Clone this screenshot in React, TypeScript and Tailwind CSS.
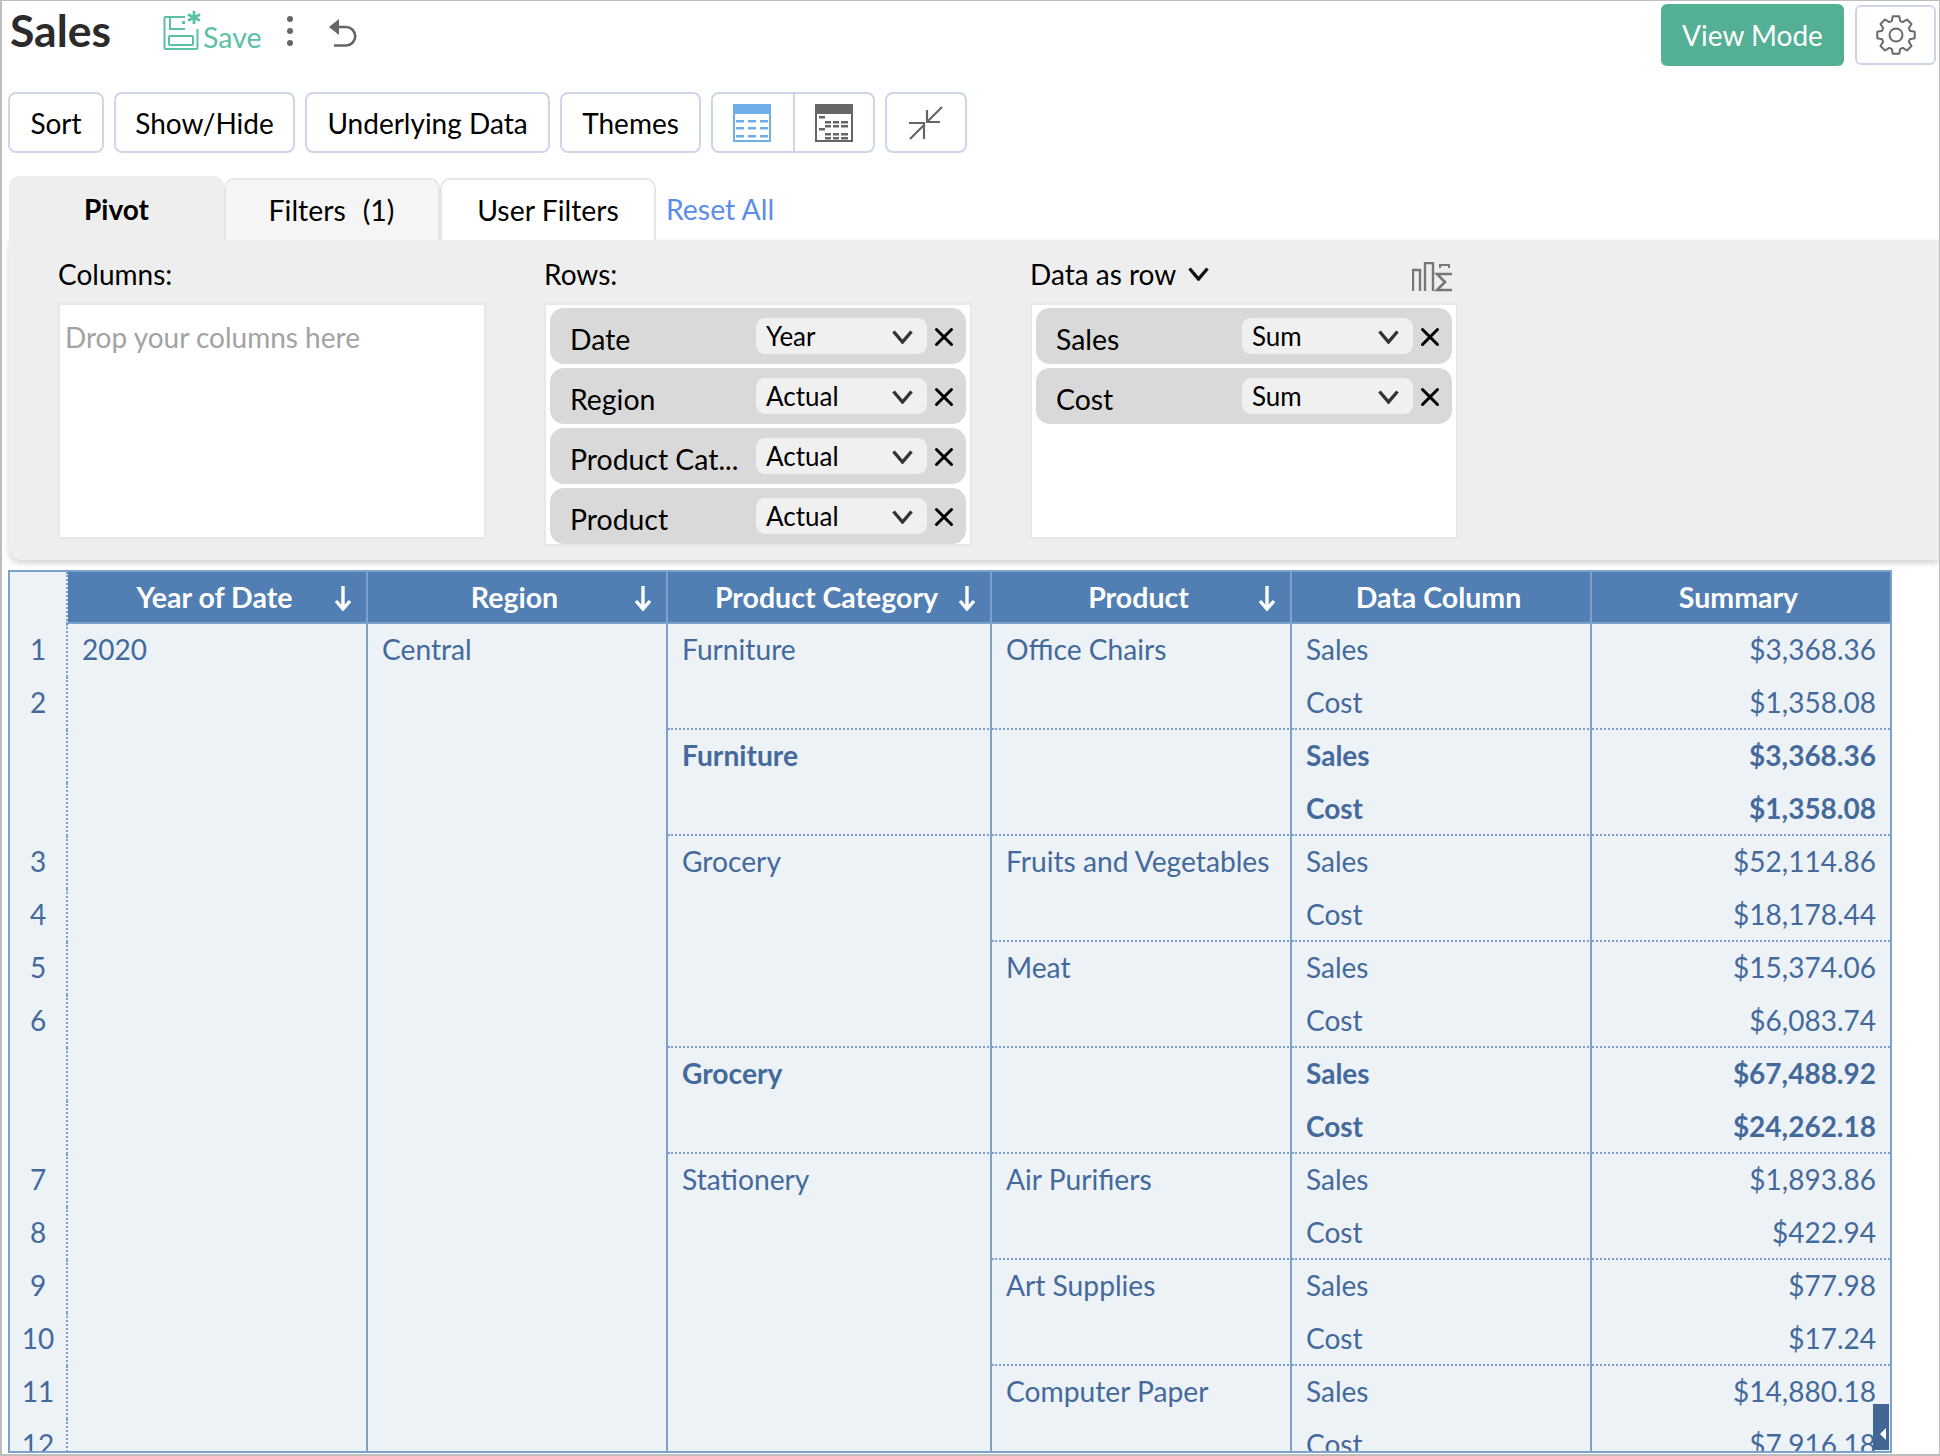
import { X } from "lucide-react";

type Row = {
  n?: number;
  cat?: string;
  catSpan?: number;
  prod?: string;
  prodSpan?: number;
  k: string;
  v: string;
  bold?: boolean;
};

const rows: Row[] = [
  { n: 1, cat: "Furniture", catSpan: 2, prod: "Office Chairs", prodSpan: 2, k: "Sales", v: "$3,368.36" },
  { n: 2, k: "Cost", v: "$1,358.08" },
  { cat: "Furniture", catSpan: 2, prod: "", prodSpan: 2, k: "Sales", v: "$3,368.36", bold: true },
  { k: "Cost", v: "$1,358.08", bold: true },
  { n: 3, cat: "Grocery", catSpan: 4, prod: "Fruits and Vegetables", prodSpan: 2, k: "Sales", v: "$52,114.86" },
  { n: 4, k: "Cost", v: "$18,178.44" },
  { n: 5, prod: "Meat", prodSpan: 2, k: "Sales", v: "$15,374.06" },
  { n: 6, k: "Cost", v: "$6,083.74" },
  { cat: "Grocery", catSpan: 2, prod: "", prodSpan: 2, k: "Sales", v: "$67,488.92", bold: true },
  { k: "Cost", v: "$24,262.18", bold: true },
  { n: 7, cat: "Stationery", catSpan: 6, prod: "Air Purifiers", prodSpan: 2, k: "Sales", v: "$1,893.86" },
  { n: 8, k: "Cost", v: "$422.94" },
  { n: 9, prod: "Art Supplies", prodSpan: 2, k: "Sales", v: "$77.98" },
  { n: 10, k: "Cost", v: "$17.24" },
  { n: 11, prod: "Computer Paper", prodSpan: 2, k: "Sales", v: "$14,880.18" },
  { n: 12, k: "Cost", v: "$7,916.18" },
];

function SaveIcon() {
  return (
    <svg width="40" height="40" viewBox="0 0 40 40" fill="none" stroke="#5cc0a6" strokeWidth="2">
      <path d="M22 7H2.5a1 1 0 0 0-1 1v30a1 1 0 0 0 1 1h31a1 1 0 0 0 1-1V19" />
      <path d="M7 8v11h15" />
      <rect x="6" y="26" width="24" height="9" rx="1" />
      <rect x="19" y="11" width="3" height="3" fill="#5cc0a6" stroke="none" />
      <path d="M31 1v13M25 4.5l12 6M37 4.5l-12 6" strokeWidth="2.8" />
    </svg>
  );
}

function UndoIcon() {
  return (
    <svg width="30" height="28" viewBox="0 0 30 28" fill="none" stroke="#666" strokeWidth="2.6">
      <path d="M0 8 10 0v16z" fill="#666" stroke="none" />
      <path d="M9 8h8a9 9 0 0 1 0 18.5H5" />
    </svg>
  );
}

function GearIcon() {
  // eight teeth, outer radius 19, root radius 14.5
  const pts: string[] = [];
  for (let i = 0; i < 8; i++) {
    const a = (i * Math.PI) / 4;
    [
      [14.5, -0.3],
      [19, -0.17],
      [19, 0.17],
      [14.5, 0.3],
    ].forEach(([r, d]) => {
      pts.push(`${(20 + r * Math.sin(a + d)).toFixed(2)},${(20 - r * Math.cos(a + d)).toFixed(2)}`);
    });
  }
  return (
    <svg width="40" height="40" viewBox="0 0 40 40" fill="none" stroke="#6a6a6a" strokeWidth="2" strokeLinejoin="round">
      <polygon points={pts.join(" ")} />
      <circle cx="20" cy="20" r="6.5" />
    </svg>
  );
}

function Chevron({ color = "#333" }: { color?: string }) {
  return (
    <svg width="21" height="14" viewBox="0 0 21 14" fill="none" stroke={color} strokeWidth="3.4">
      <path d="M1.5 1.5 10.5 12 19.5 1.5" />
    </svg>
  );
}

function TableIcon({ color, tree }: { color: string; tree?: boolean }) {
  const ys = [16, 23, 31];
  return (
    <svg width="38" height="38" viewBox="0 0 38 38">
      <rect width="38" height="38" fill={color} />
      <rect x="2" y="10" width="34" height="26" fill="#fff" />
      {!tree &&
        ys.map((y) =>
          [3, 15, 27].map((x) => <rect key={`${x}-${y}`} x={x} y={y} width="8" height="2.5" fill={color} />)
        )}
      {tree && (
        <g fill={color}>
          <rect x="4" y="12" width="6" height="2.5" />
          <rect x="10" y="17" width="6" height="2.5" />
          <rect x="18" y="17" width="6" height="2.5" />
          <rect x="26" y="17" width="7" height="2.5" />
          <rect x="10" y="21" width="6" height="2.5" />
          <rect x="18" y="21" width="6" height="2.5" />
          <rect x="26" y="21" width="7" height="2.5" />
          <rect x="4" y="24" width="6" height="2.5" />
          <rect x="10" y="29" width="6" height="2.5" />
          <rect x="18" y="29" width="6" height="2.5" />
          <rect x="26" y="29" width="7" height="2.5" />
          <rect x="10" y="33" width="6" height="2.5" />
          <rect x="18" y="33" width="6" height="2.5" />
          <rect x="26" y="33" width="7" height="2.5" />
        </g>
      )}
    </svg>
  );
}

function CollapseIcon() {
  return (
    <svg width="34" height="34" viewBox="0 0 34 34" fill="none" stroke="#666" strokeWidth="2.2">
      <path d="M33 1 19 15M18 4v12h13" />
      <path d="M1 33l14-14M0 17h15v16" />
    </svg>
  );
}

function SigmaIcon() {
  return (
    <svg width="41" height="30" viewBox="0 0 41 30" fill="none" stroke="#777" strokeWidth="2">
      <path d="M1 29V8h7v21M13 29V1h8v28" strokeWidth="2.4" />
      <path d="M28 6V3h9v3" />
      <path d="M40 12H25l8 8-8 8h15" strokeWidth="2.6" />
    </svg>
  );
}

function SortArrow() {
  return (
    <svg width="18" height="26" viewBox="0 0 18 26" fill="none" stroke="#fff" strokeWidth="3.4" className="absolute right-[14px] top-[13px]">
      <path d="M9 1v22M2 16l7 8 7-8" />
    </svg>
  );
}

function Pill({ label, value }: { label: string; value: string }) {
  return (
    <div className="flex h-[56px] w-[416px] shrink-0 items-start rounded-[14px] bg-[#d9d9d9] pt-[10px]">
      <span className="mt-[3px] w-[206px] pl-[20px] text-[28.4px] leading-[36px] text-black">{label}</span>
      <div className="flex h-[36px] w-[171px] items-center justify-between rounded-[9px] bg-[#f0f0f0] pl-[10px] pr-[14px]">
        <span className="text-[26px] leading-[36px] text-black">{value}</span>
        <span className="pt-[2px]">
          <Chevron />
        </span>
      </div>
      <div className="flex h-[36px] flex-1 items-center justify-center pr-[5px] pt-[2px]">
        <X size={30} strokeWidth={2.4} className="text-black" />
      </div>
    </div>
  );
}

function ToolButton({ children, className }: { children: React.ReactNode; className: string }) {
  return (
    <button className={`flex h-[61px] items-center justify-center rounded-[8px] border-2 border-[#cdd6e8] bg-white text-[28px] text-black ${className}`}>
      {children}
    </button>
  );
}

const dotted = "[border-bottom:2px_dotted_#7ba1cc]";
const line = "[border-right:2px_solid_#7ba1cc]";
const cell = "align-top pt-[8px] leading-[34px]";
const wide = "text-[28.2px]";

export default function App() {
  return (
    <div className="relative h-[1456px] w-[1940px] overflow-hidden border-b-2 border-l-2 border-r border-t border-[#bdbdbd] bg-white [font-family:Lato,sans-serif]">
      <div className="flex h-[91px] items-start">
        <h1 className="ml-[8px] text-[44.5px] font-bold leading-[58px] text-[#2b2b2b]">Sales</h1>
        <div className="ml-[52px] mt-[9px] flex items-end">
          <SaveIcon />
          <span className="translate-y-[3px] text-[28.5px] leading-[32px] text-[#5cc0a6]">Save</span>
        </div>
        <div className="ml-[25px] mt-[15px] flex h-[30px] flex-col justify-between">
          <span className="h-[6px] w-[6px] rounded-full bg-[#666]" />
          <span className="h-[6px] w-[6px] rounded-full bg-[#666]" />
          <span className="h-[6px] w-[6px] rounded-full bg-[#666]" />
        </div>
        <span className="ml-[36px] mt-[18px]">
          <UndoIcon />
        </span>
        <button className="ml-auto mt-[3px] flex h-[62px] w-[183px] items-center justify-center rounded-[6px] bg-[#53b094] text-[28px] text-white">
          View Mode
        </button>
        <button className="ml-[11px] mr-[3px] mt-[4px] flex h-[60px] w-[81px] items-center justify-center rounded-[6px] border-2 border-[#cdd6e8]">
          <GearIcon />
        </button>
      </div>

      <div className="ml-[6px] flex gap-[10px]">
        <ToolButton className="w-[96px]">Sort</ToolButton>
        <ToolButton className="w-[181px]">Show/Hide</ToolButton>
        <ToolButton className="w-[245px]">Underlying Data</ToolButton>
        <ToolButton className="w-[141px]">Themes</ToolButton>
        <div className="flex h-[61px] w-[164px] rounded-[8px] border-2 border-[#cdd6e8]">
          <div className="flex flex-1 items-center justify-center border-r-2 border-[#cdd6e8] pr-[1px]">
            <TableIcon color="#6daee8" />
          </div>
          <div className="flex flex-1 items-center justify-center">
            <TableIcon color="#666666" tree />
          </div>
        </div>
        <ToolButton className="w-[82px]">
          <CollapseIcon />
        </ToolButton>
      </div>

      <div className="ml-[7px] mt-[22px] flex h-[65px] items-end">
        <div className="flex h-[64px] w-[215px] items-center justify-center rounded-t-[10px] bg-[#eeeeee] pt-[2px] text-[28px] font-bold text-black">
          Pivot
        </div>
        <div className="flex h-[62px] w-[216px] items-center justify-center rounded-t-[10px] border-2 border-b-0 border-[#e6e6e6] bg-[#f5f5f5] pr-[1px] text-[28.4px] text-black">
          <span className="mr-[17px]">Filters</span>(1)
        </div>
        <div className="flex h-[62px] w-[216px] items-center justify-center rounded-t-[10px] border-2 border-b-0 border-[#e6e6e6] bg-white text-[28.4px] text-black">
          User Filters
        </div>
        <span className="ml-[10px] self-center pt-[3px] text-[28.4px] text-[#5b8dea]">Reset All</span>
      </div>

      <div className="ml-[7px] flex h-[320px] gap-[58px] rounded-bl-[12px] bg-[#eeeeee] pl-[49px] shadow-[0_3px_6px_rgba(0,0,0,0.18)]">
        <div className="w-[428px]">
          <div className="h-[63px] pt-[17px] text-[28px] leading-[34px] text-black">Columns:</div>
          <div className="h-[236px] border-2 border-[#e8e8e8] bg-white pl-[5px] pt-[15px] text-[28px] leading-[34px] text-[#a3a3a3]">
            Drop your columns here
          </div>
        </div>
        <div className="w-[428px]">
          <div className="h-[63px] pt-[17px] text-[28px] leading-[34px] text-black">Rows:</div>
          <div className="flex h-[243px] flex-col gap-[4px] border-2 border-[#e8e8e8] bg-white px-[4px] pt-[3px]">
            <Pill label="Date" value="Year" />
            <Pill label="Region" value="Actual" />
            <Pill label="Product Cat..." value="Actual" />
            <Pill label="Product" value="Actual" />
          </div>
        </div>
        <div className="w-[428px]">
          <div className="flex h-[63px] items-start justify-between pt-[17px] text-[28px] leading-[34px] text-black">
            <span className="flex items-center gap-[12px]">
              Data as row
              <Chevron color="#111" />
            </span>
            <span className="mr-[5px] mt-[5px]">
              <SigmaIcon />
            </span>
          </div>
          <div className="flex h-[236px] flex-col gap-[4px] border-2 border-[#e8e8e8] bg-white px-[4px] pt-[3px]">
            <Pill label="Sales" value="Sum" />
            <Pill label="Cost" value="Sum" />
          </div>
        </div>
      </div>

      <div className="relative ml-[6px] mt-[10px] h-[883px] w-[1884px] overflow-hidden border-2 border-[#7ba1cc] bg-[#edf2f7] text-[#44699b]">
        <table className="w-[1880px] table-fixed border-separate border-spacing-0">
          <colgroup>
            <col className="w-[58px]" />
            <col className="w-[300px]" />
            <col className="w-[300px]" />
            <col className="w-[324px]" />
            <col className="w-[300px]" />
            <col className="w-[300px]" />
            <col className="w-[298px]" />
          </colgroup>
          <thead>
            <tr className="h-[52px] text-[28.5px] font-bold text-white">
              <th className="[border-right:2px_dotted_#7ba1cc]" />
              {["Year of Date", "Region", "Product Category", "Product", "Data Column", "Summary"].map((h, i) => (
                <th
                  key={h}
                  className={`relative bg-[#517eb3] pr-[5px] [border-bottom:2px_solid_#7ba1cc] ${i < 5 ? line : ""}`}
                >
                  {h}
                  {i < 4 && <SortArrow />}
                </th>
              ))}
            </tr>
          </thead>
          <tbody>
            {rows.map((r, i) => (
              <tr key={i} className="h-[53px]">
                <td className={`${cell} text-center text-[28px] [border-right:2px_dotted_#7ba1cc]`}>{r.n}</td>
                {i === 0 && (
                  <>
                    <td rowSpan={16} className={`${cell} ${line} pl-[14px] text-[28px]`}>2020</td>
                    <td rowSpan={16} className={`${cell} ${line} ${wide} pl-[14px]`}>Central</td>
                  </>
                )}
                {r.cat && (
                  <td rowSpan={r.catSpan} className={`${cell} ${line} ${dotted} ${wide} pl-[14px] ${r.bold ? "font-bold" : ""}`}>
                    {r.cat}
                  </td>
                )}
                {r.prod !== undefined && (
                  <td rowSpan={r.prodSpan} className={`${cell} ${line} ${dotted} ${wide} pl-[14px]`}>
                    {r.prod}
                  </td>
                )}
                <td className={`${cell} ${line} ${i % 2 ? dotted : ""} pl-[14px] text-[28px] ${r.bold ? "font-bold" : ""}`}>{r.k}</td>
                <td className={`${cell} ${i % 2 ? dotted : ""} pr-[14px] text-right text-[28px] ${r.bold ? "font-bold" : ""}`}>{r.v}</td>
              </tr>
            ))}
          </tbody>
        </table>
        <div className="absolute bottom-[1px] right-[1px] flex h-[46px] w-[16px] items-center justify-end bg-[#426794] pr-[3px] pt-[14px]">
          <span className="h-0 w-0 border-y-[6px] border-r-[6px] border-y-transparent border-r-white" />
        </div>
      </div>
    </div>
  );
}
